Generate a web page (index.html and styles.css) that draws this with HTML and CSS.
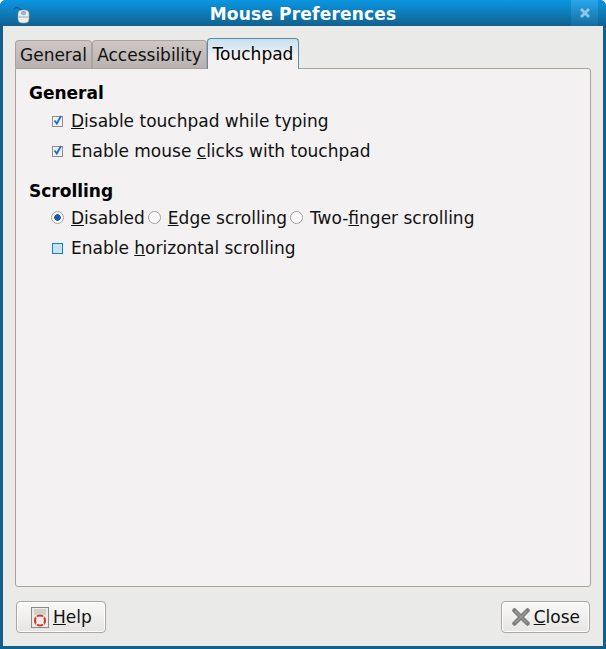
FILE: index.html
```html
<!DOCTYPE html>
<html lang="en">
<head>
    <meta charset="UTF-8">
    <title>Mouse Preferences</title>
    <link rel="stylesheet" href="styles.css">
</head>
<body>
    <div class="window">
        <div class="titlebar">
            <svg class="app-icon" viewBox="0 0 20 20" xmlns="http://www.w3.org/2000/svg">
                <path d="M3 4.500C4 2 6 2 8 3.500S11 5 13 6" fill="none" stroke="#0b4468" stroke-width="0.8"/>
                <rect x="7" y="5" width="11" height="13" rx="4" fill="#eeeee8" stroke="#a0a096" stroke-width="0.6"/>
                <rect x="10" y="6" width="5" height="4" rx="1.500" fill="#8fb4d8"/>
                <path d="M7.500 12H17.500" stroke="#a8a89e" stroke-width="1"/>
            </svg>
            <div class="title">Mouse Preferences</div>
            <div class="close-box">
                <svg viewBox="0 0 12 12" xmlns="http://www.w3.org/2000/svg">
                    <path d="M2 2L10 10M10 2L2 10" stroke="#8fc6e6" stroke-width="3"/>
                </svg>
            </div>
        </div>
        <div class="content">
            <div class="tabs">
                <div class="tab tab-general">General</div>
                <div class="tab tab-access">Accessibility</div>
                <div class="tab active">Touchpad</div>
            </div>
            <div class="panel">
                <h2 class="first">General</h2>
                <div class="row">
                    <span class="check">
                        <svg viewBox="0 0 11 11" xmlns="http://www.w3.org/2000/svg"><path d="M2.500 5.500L4.800 8.500L9 1" fill="none" stroke="#1c6fd4" stroke-width="1.800"/></svg>
                    </span>
                    <span><u>D</u>isable touchpad while typing</span>
                </div>
                <div class="row">
                    <span class="check">
                        <svg viewBox="0 0 11 11" xmlns="http://www.w3.org/2000/svg"><path d="M2.500 5.500L4.800 8.500L9 1" fill="none" stroke="#1c6fd4" stroke-width="1.800"/></svg>
                    </span>
                    <span>Enable mouse <u>c</u>licks with touchpad</span>
                </div>
                <h2 class="second">Scrolling</h2>
                <div class="row">
                    <span class="radio on"></span>
                    <span class="radio-label"><u>D</u>isabled</span>
                    <span class="radio"></span>
                    <span class="radio-label"><u>E</u>dge scrolling</span>
                    <span class="radio"></span>
                    <span class="radio-label">Two-<u>f</u>inger scrolling</span>
                </div>
                <div class="row">
                    <span class="check mixed"></span>
                    <span>Enable <u>h</u>orizontal scrolling</span>
                </div>
            </div>
            <div class="buttons">
                <div class="button button-help">
                    <svg class="help-icon" viewBox="0 0 18 21" xmlns="http://www.w3.org/2000/svg">
                        <rect x="0.500" y="0.500" width="17" height="20" fill="#ecece6" stroke="#8a8a84"/>
                        <path d="M3 3H15M3 5H15M3 7H15" stroke="#b4b8ac" stroke-width="1"/>
                        <circle cx="9" cy="13.500" r="5" fill="none" stroke="#cf3a34" stroke-width="2.200"/>
                        <path d="M5 9.500L7.500 12M13 9.500L10.500 12M5 17.500L7.500 15M13 17.500L10.500 15" stroke="#f4f4f0" stroke-width="1.300"/>
                    </svg>
                    <span><u>H</u>elp</span>
                </div>
                <div class="button button-close">
                    <svg class="close-icon" viewBox="0 0 18 18" xmlns="http://www.w3.org/2000/svg">
                        <path d="M2.500 2.500L15.500 15.500M15.500 2.500L2.500 15.500" stroke="#7d7d79" stroke-width="4.500" stroke-linecap="round"/>
                        <path d="M3 3L15 15M15 3L3 15" stroke="#989894" stroke-width="1.500"/>
                    </svg>
                    <span><u>C</u>lose</span>
                </div>
            </div>
        </div>
    </div>
</body>
</html>
```

FILE: styles.css
```css
html, body {
    margin: 0;
    padding: 0;
}
body {
    font-family: "DejaVu Sans", sans-serif;
    font-size: 17px;
    color: #111;
}
.window {
    width: 606px;
    height: 649px;
    box-sizing: border-box;
    display: flex;
    flex-direction: column;
    background: #115f8c;
    border-radius: 6px 6px 0 0;
    overflow: hidden;
}
.titlebar {
    height: 26px;
    flex: none;
    display: grid;
    grid-template-columns: 1fr auto 1fr;
    align-items: center;
    background: linear-gradient(#0a96e2, #12618f);
}
.app-icon {
    width: 20px;
    height: 20px;
    margin-left: 11px;
    margin-top: 3px;
}
.title {
    color: #fff;
    font-weight: bold;
    font-size: 17px;
    letter-spacing: 0.2px;
    padding-top: 1px;
}
.close-box {
    justify-self: end;
    box-sizing: border-box;
    width: 27px;
    height: 26px;
    margin-right: 8px;
    display: flex;
    align-items: center;
    justify-content: center;
    background: linear-gradient(#28a6ec, #156c9e);
}
.close-box svg {
    width: 12px;
    height: 12px;
}
.content {
    flex: 1;
    margin: 0 3px 3px;
    padding: 12px 12px 0;
    display: flex;
    flex-direction: column;
    background: #eaeae8;
}
.tabs {
    height: 31px;
    flex: none;
    display: flex;
    align-items: flex-end;
    position: relative;
    z-index: 1;
}
.tab {
    box-sizing: border-box;
    height: 28px;
    text-align: center;
    line-height: 29px;
    background: linear-gradient(#cdc7c5, #b9b2b0);
    border: 1px solid #a9a3a0;
    border-bottom: 0;
    border-radius: 4px 4px 0 0;
    margin-bottom: 1px;
}
.tab-general {
    width: 77px;
}
.tab-access {
    width: 115px;
}
.tab.active {
    width: 92px;
    height: 31px;
    line-height: 31px;
    margin-bottom: 0;
    color: #000;
    background: linear-gradient(#c5e0f0, #f3f1f2 55%);
    border-color: #5d8aa6;
    border-bottom: 0;
}
.panel {
    flex: 1;
    box-sizing: border-box;
    padding: 12px 13px;
    background: #f3f1f2;
    border: 1px solid #a9a3a0;
    border-radius: 0 3px 3px 3px;
    margin-top: -1px;
}
h2 {
    margin: 0;
    height: 24px;
    line-height: 24px;
    font-size: 17px;
    font-weight: bold;
    color: #000;
}
h2.first {
    height: 25px;
}
h2.second {
    margin-top: 13px;
}
.row {
    height: 30px;
    display: flex;
    align-items: center;
    padding-left: 22px;
}
.check {
    box-sizing: border-box;
    width: 11px;
    height: 11px;
    margin-left: 1px;
    margin-right: 8px;
    border: 1px solid #8e8e8e;
    background: #f1f1f1;
    display: flex;
}
.check svg {
    width: 11px;
    height: 11px;
    margin: -2px 0 0 -1px;
    flex: none;
}
.check.mixed {
    border-color: #1183c4;
    background: #c6e3f2;
}
.radio {
    box-sizing: border-box;
    width: 13px;
    height: 13px;
    margin-right: 7px;
    margin-top: -2px;
    border: 1px solid #a4a09e;
    border-radius: 50%;
    background: #fafafa;
    flex: none;
}
.radio.on {
    background: radial-gradient(circle, #1458b8 0 3px, #fafafa 3.500px);
}
.radio-label {
    margin-right: 3px;
}
.buttons {
    height: 59px;
    box-sizing: border-box;
    flex: none;
    display: flex;
    justify-content: space-between;
    align-items: flex-start;
    padding: 14px 1px 0;
}
.button {
    box-sizing: border-box;
    height: 32px;
    display: flex;
    align-items: center;
    gap: 4px;
    border: 1px solid #aaa6a2;
    border-radius: 4px;
    background: linear-gradient(#f9f9f8, #e6e5e3);
    box-shadow: inset 0 0 0 1px #fdfdfc;
}
.button-help {
    padding: 0 13px 0 14px;
}
.button-close {
    padding: 0 9px 0 10px;
}
.help-icon {
    width: 18px;
    height: 21px;
}
.close-icon {
    width: 18px;
    height: 18px;
}
```
